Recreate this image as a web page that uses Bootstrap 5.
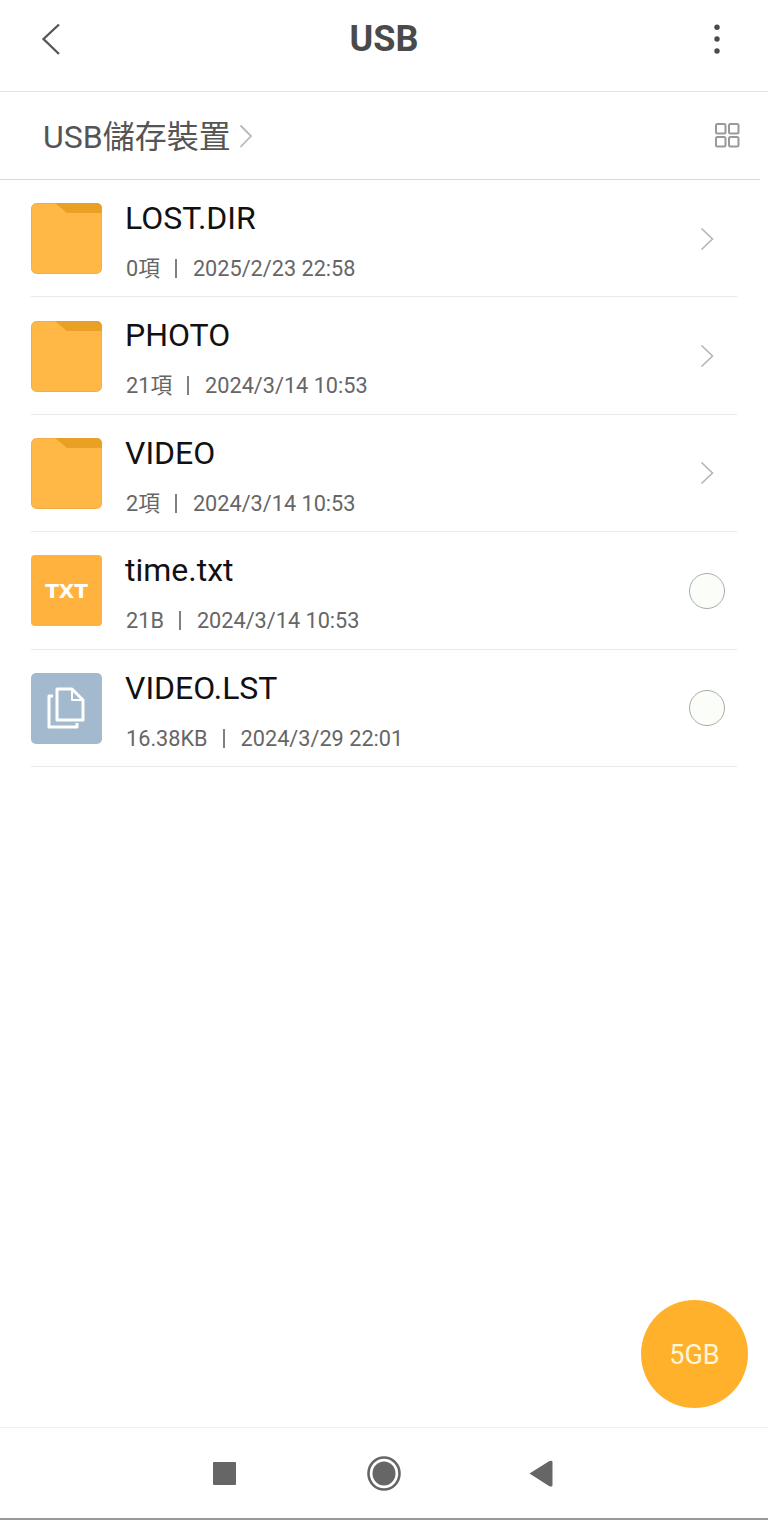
<!DOCTYPE html>
<html lang="zh-Hant">
<head>
    <meta charset="UTF-8">
    <title>USB</title>
    <link href="https://cdn.jsdelivr.net/npm/bootstrap@5.3.0/dist/css/bootstrap.min.css" rel="stylesheet">
    <style>
        html, body { background: #fff; }
        body { font-family: Roboto, "Noto Sans CJK TC", sans-serif; }
        .page { height: 1520px; width: 768px; overflow: hidden; }
        .top-bar { height: 92px; border-bottom: 1px solid #e4e4e4; padding-bottom: 14px; }
        .top-side { flex: 1; }
        .back-icon { margin-left: 41px; }
        .menu-icon { margin-right: 47px; }
        .top-title { font-size: 36px; font-weight: 700; color: #4a4a4a; line-height: 1; }
        .crumb-bar { height: 88px; padding: 0 20px 0 43px; border-bottom: 1px solid #d9d9d9; width: 760px; }
        .crumb-text { font-size: 32px; color: #555; line-height: 1; padding-top: 3px; }
        .file-list { margin-left: 31px; width: 706px; }
        .file-row { height: 117.4px; border-bottom: 1px solid #e9e9e9; padding-top: 23.2px; }
        .file-icon { width: 71px; height: 71px; flex: none; margin-right: 24px; }
        .txt-icon { background: #ffb23e; border-radius: 4px; color: #fff; font-weight: 700; font-size: 20px; font-family: "DejaVu Sans", sans-serif; }
        .file-info { margin-top: -5.25px; margin-left: -1px; }
        .file-name { font-size: 32px; line-height: 40px; color: #111; }
        .file-meta { font-size: 21.7px; line-height: 28px; color: #666; margin-top: 17px; margin-left: 1px; }
        .meta-sep { display: inline-block; width: 2px; height: 19px; background: #808080; margin: 0 16px 0 15px; vertical-align: -2px; }
        .row-end { width: 36px; margin-right: 12px; height: 71px; }
        .pick-circle { width: 36px; height: 36px; border: 1.5px solid #a9aca6; border-radius: 50%; background: #fbfdf9; }
        .fab-size { position: absolute; left: 641px; top: 1300px; width: 107px; height: 108px; background: #ffb12b; color: #fff6d8; font-size: 27px; border-radius: 50%; padding-top: 2px; }
        .nav-bottom { height: 93px; border-top: 1px solid #f1f1f1; border-bottom: 2px solid #999; padding-left: 213px; }
        .nav-home { margin-left: 130px; }
        .nav-back { margin-left: 127px; }
    </style>
</head>
<body>
    <div class="page position-relative d-flex flex-column">
        <div class="top-bar d-flex align-items-center">
            <div class="top-side d-flex">
                <svg class="back-icon" width="20" height="32" viewBox="0 0 20 32"><path d="M18 1.500 2.500 16 18 31" fill="none" stroke="#555" stroke-width="2.300"/></svg>
            </div>
            <div class="top-title">USB</div>
            <div class="top-side d-flex justify-content-end">
                <svg class="menu-icon" width="8" height="30" viewBox="0 0 8 30"><circle cx="4" cy="3.200" r="2.700" fill="#4a4a4a"/><circle cx="4" cy="15" r="2.700" fill="#4a4a4a"/><circle cx="4" cy="27" r="2.700" fill="#4a4a4a"/></svg>
            </div>
        </div>

        <div class="crumb-bar d-flex align-items-center justify-content-between">
            <div class="d-flex align-items-center">
                <span class="crumb-text">USB儲存裝置</span>
                <svg width="14" height="24" viewBox="0 0 14 24" class="ms-2"><path d="M1.500 1.500 12 12 1.500 23" fill="none" stroke="#b9b9b9" stroke-width="1.800"/></svg>
            </div>
            <svg width="25" height="25" viewBox="0 0 25 25"><g fill="none" stroke="#999" stroke-width="2"><rect x="1" y="1" width="9.500" height="9.500" rx="1.500"/><rect x="14" y="1" width="9.500" height="9.500" rx="1.500"/><rect x="1" y="14" width="9.500" height="9.500" rx="1.500"/><rect x="14" y="14" width="9.500" height="9.500" rx="1.500"/></g></svg>
        </div>

        <div class="file-list">
            <div class="file-row d-flex">
                <svg class="file-icon" viewBox="0 0 71 71"><rect x=".5" y=".5" width="70" height="70" rx="5" fill="#ffb846" stroke="#efae46"/><path d="M24 0H66a5 5 0 0 1 5 5V10H36Z" fill="#e9a024"/></svg>
                <div class="file-info flex-grow-1">
                    <div class="file-name">LOST.DIR</div>
                    <div class="file-meta">0項<span class="meta-sep"></span>2025/2/23 22:58</div>
                </div>
                <div class="row-end d-flex align-items-center justify-content-center">
                    <svg width="14" height="24" viewBox="0 0 14 24"><path d="M1.500 1.500 12.500 12 1.500 22.500" fill="none" stroke="#b4b4b4" stroke-width="1.600"/></svg>
                </div>
            </div>
            <div class="file-row d-flex">
                <svg class="file-icon" viewBox="0 0 71 71"><rect x=".5" y=".5" width="70" height="70" rx="5" fill="#ffb846" stroke="#efae46"/><path d="M24 0H66a5 5 0 0 1 5 5V10H36Z" fill="#e9a024"/></svg>
                <div class="file-info flex-grow-1">
                    <div class="file-name">PHOTO</div>
                    <div class="file-meta">21項<span class="meta-sep"></span>2024/3/14 10:53</div>
                </div>
                <div class="row-end d-flex align-items-center justify-content-center">
                    <svg width="14" height="24" viewBox="0 0 14 24"><path d="M1.500 1.500 12.500 12 1.500 22.500" fill="none" stroke="#b4b4b4" stroke-width="1.600"/></svg>
                </div>
            </div>
            <div class="file-row d-flex">
                <svg class="file-icon" viewBox="0 0 71 71"><rect x=".5" y=".5" width="70" height="70" rx="5" fill="#ffb846" stroke="#efae46"/><path d="M24 0H66a5 5 0 0 1 5 5V10H36Z" fill="#e9a024"/></svg>
                <div class="file-info flex-grow-1">
                    <div class="file-name">VIDEO</div>
                    <div class="file-meta">2項<span class="meta-sep"></span>2024/3/14 10:53</div>
                </div>
                <div class="row-end d-flex align-items-center justify-content-center">
                    <svg width="14" height="24" viewBox="0 0 14 24"><path d="M1.500 1.500 12.500 12 1.500 22.500" fill="none" stroke="#b4b4b4" stroke-width="1.600"/></svg>
                </div>
            </div>
            <div class="file-row d-flex">
                <div class="file-icon txt-icon d-flex align-items-center justify-content-center">TXT</div>
                <div class="file-info flex-grow-1">
                    <div class="file-name">time.txt</div>
                    <div class="file-meta">21B<span class="meta-sep"></span>2024/3/14 10:53</div>
                </div>
                <div class="row-end d-flex align-items-center justify-content-center">
                    <div class="pick-circle flex-shrink-0"></div>
                </div>
            </div>
            <div class="file-row d-flex">
                <svg class="file-icon" viewBox="0 0 71 71"><rect width="71" height="71" rx="5" fill="#a3b9ce"/><g fill="none" stroke="#fff" stroke-width="3" stroke-linejoin="round"><path d="M26 16H41L52 27V47H26Z"/><path d="M41 16V27H52" stroke-width="2"/><path d="M22 23H18V54H46V50"/></g></svg>
                <div class="file-info flex-grow-1">
                    <div class="file-name">VIDEO.LST</div>
                    <div class="file-meta">16.38KB<span class="meta-sep"></span>2024/3/29 22:01</div>
                </div>
                <div class="row-end d-flex align-items-center justify-content-center">
                    <div class="pick-circle flex-shrink-0"></div>
                </div>
            </div>
        </div>

        <div class="flex-grow-1"></div>

        <div class="fab-size d-flex align-items-center justify-content-center">5GB</div>

        <div class="nav-bottom d-flex align-items-center">
            <svg width="23" height="23" viewBox="0 0 23 23"><rect width="23" height="23" rx="1" fill="#666"/></svg>
            <svg class="nav-home" width="36" height="37" viewBox="0 0 36 37"><ellipse cx="18" cy="18.500" rx="15.500" ry="16" fill="none" stroke="#666" stroke-width="2.600"/><ellipse cx="18" cy="18.500" rx="11.500" ry="12" fill="#666"/></svg>
            <svg class="nav-back" width="24" height="27" viewBox="0 0 24 27"><path d="M.5 13.500 20 1.200c2-1 3.500-.7 3.500 1V25c0 1.500-1.500 2-3.500 1Z" fill="#666"/></svg>
        </div>
    </div>
</body>
</html>
